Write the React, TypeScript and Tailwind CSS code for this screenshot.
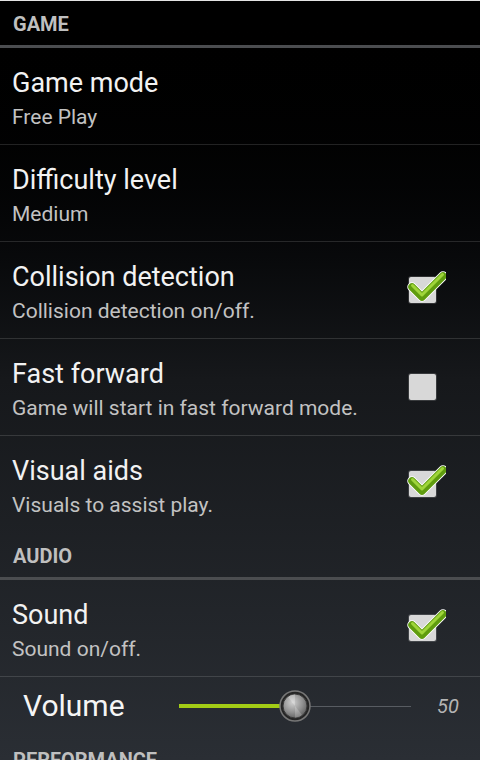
import React from "react";

type Pref = {
  title: string;
  summary: string;
  check?: boolean;
  last?: boolean;
};

const game: Pref[] = [
  { title: "Game mode", summary: "Free Play" },
  { title: "Difficulty level", summary: "Medium" },
  { title: "Collision detection", summary: "Collision detection on/off.", check: true },
  { title: "Fast forward", summary: "Game will start in fast forward mode.", check: false },
  { title: "Visual aids", summary: "Visuals to assist play.", check: true, last: true },
];

// Holo-style checkbox with the green tick spilling over the box
function CheckBox({ checked }: { checked: boolean }) {
  return (
    <div className="relative h-[26px] w-[27px] rounded-[2px] bg-[#d8d8d8] shadow-[0_0_0_1px_rgba(255,255,255,0.15)]">
      {checked && (
        <svg className="absolute -left-[3px] -top-[8px]" width="40" height="40" viewBox="0 0 40 40">
          <polyline points="6,18 16,28 37,7" fill="none" stroke="#ffffff" strokeWidth="9.5" strokeLinecap="round" strokeLinejoin="round" />
          <polyline points="6,18 16,28 37,7" fill="none" stroke="#5f9c0e" strokeWidth="7.5" strokeLinecap="round" strokeLinejoin="round" />
          <polyline points="6.5,16.5 16,26 36.5,5.5" fill="none" stroke="#9fd53a" strokeWidth="3" strokeLinecap="round" strokeLinejoin="round" />
        </svg>
      )}
    </div>
  );
}

function PrefRow({ pref }: { pref: Pref }) {
  return (
    <div
      className={`flex items-center pl-3 pr-[44px] ${
        pref.last ? "h-[96px]" : "h-[97px] border-b border-white/[0.13]"
      }`}
    >
      <div className="flex-1 pt-[5px]">
        <div className="text-[27px] leading-[32px] text-[#f2f2f2]">{pref.title}</div>
        <div className="mt-[5px] text-[21px] leading-[26px] text-[#c2c2c2]">{pref.summary}</div>
      </div>
      {pref.check !== undefined && <CheckBox checked={pref.check} />}
    </div>
  );
}

function Header({ label, className }: { label: string; className: string }) {
  return (
    <>
      <div className={`pl-[13px] text-[20px] font-bold leading-[20px] text-[#bfbfbf] ${className}`}>
        {label}
      </div>
      <div className="h-[3px] bg-[#4b4d50]" />
    </>
  );
}

export default function App() {
  return (
    <div
      className="h-[760px] w-[480px] overflow-hidden bg-gradient-to-b from-[#000000] via-[#16181b] to-[#2a2e34]"
      style={{ fontFamily: "Roboto, 'Noto Sans', sans-serif" }}
    >
      <div className="h-px bg-[#e4e4e4]" />
      <Header label="GAME" className="h-[44px] pt-[13px]" />
      {game.map((p) => (
        <PrefRow key={p.title} pref={p} />
      ))}

      <Header label="AUDIO" className="h-[45px] pt-[14px]" />
      <PrefRow pref={{ title: "Sound", summary: "Sound on/off.", check: true }} />

      {/* Volume slider */}
      <div className="flex h-[58px] items-center">
        <div className="w-[179px] pl-[23px] text-[30px] leading-[36px] text-[#f5f5f5]">Volume</div>
        <div className="relative h-[34px] w-[232px]">
          <div className="absolute left-0 right-0 top-[17px] h-px bg-[#585c62]" />
          <div className="absolute left-0 top-[15px] h-[4px] w-[104px] bg-[#a2cc16]" />
          <svg className="absolute left-[100px] top-[1px]" width="32" height="32" viewBox="0 0 32 32">
            <defs>
              <radialGradient id="knob" cx="0.4" cy="0.35" r="0.7">
                <stop offset="0" stopColor="#d0d0d0" />
                <stop offset="0.6" stopColor="#909090" />
                <stop offset="1" stopColor="#5e5e5e" />
              </radialGradient>
            </defs>
            <circle cx="16" cy="16" r="15" fill="#262626" stroke="#777" strokeWidth="1.5" />
            <circle cx="16" cy="16" r="12" fill="url(#knob)" stroke="#3a3a3a" strokeWidth="1" />
            <path d="M16 16 L9 7 A12 12 0 0 1 16 4 Z" fill="#ffffff" opacity="0.25" />
            <path d="M16 16 L23 25 A12 12 0 0 1 16 28 Z" fill="#ffffff" opacity="0.2" />
          </svg>
        </div>
        <div className="ml-[26px] text-[20px] italic leading-[24px] text-[#b4b4b4]">50</div>
      </div>

      <Header label="PERFORMANCE" className="h-[46px] pt-[15px]" />
    </div>
  );
}
